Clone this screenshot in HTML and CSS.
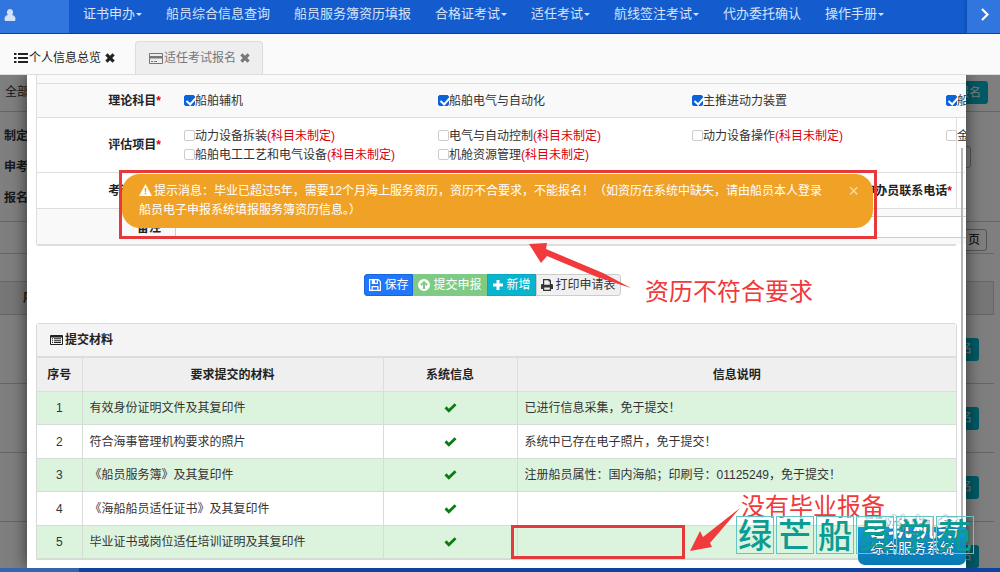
FILE: index.html
```html
<!DOCTYPE html>
<html lang="zh-CN">
<head>
<meta charset="utf-8">
<title>适任考试报名</title>
<link rel="stylesheet" href="styles.css">
</head>
<body>
<svg class="defs" aria-hidden="true">
  <symbol id="check" viewBox="0 0 14 11"><path d="M5.2 10.8.4 6l2.2-2.300 2.600 2.600L11.500.2l2.100 2.200z"/></symbol>
  <symbol id="close" viewBox="0 0 10 10"><path d="M2.500.3 5 2.800 7.500.3 9.700 2.500 7.200 5l2.500 2.500-2.200 2.200L5 7.200 2.500 9.700.3 7.500 2.800 5 .3 2.500z"/></symbol>
</svg>

<header class="topbar">
  <div class="user">
    <svg width="12" height="12" viewBox="0 0 12 12"><path d="M6 0a3 3.300 0 0 1 2.500 5.200L8.300 6C10.500 6.300 11.500 8 11.500 10.200c0 1-.6 1.800-1.500 1.800H2C1.100 12 .5 11.200.5 10.200.5 8 1.500 6.300 3.700 6l-.2-.8A3 3.300 0 0 1 6 0z"/></svg>
  </div>
  <nav class="menu">
    <a href="#" class="drop">证书申办</a>
    <a href="#">船员综合信息查询</a>
    <a href="#">船员服务簿资历填报</a>
    <a href="#" class="drop">合格证考试</a>
    <a href="#" class="drop">适任考试</a>
    <a href="#" class="drop">航线签注考试</a>
    <a href="#">代办委托确认</a>
    <a href="#" class="drop">操作手册</a>
  </nav>
  <button class="more" aria-label="更多">
    <svg width="8" height="13" viewBox="0 0 8 13"><path d="M1 1l5.500 5.500L1 12" fill="none" stroke="#fff" stroke-width="2.200"/></svg>
  </button>
</header>

<div class="tabs">
  <div class="tab">
    <svg width="14" height="10" viewBox="0 0 14 10"><path d="M0 0h2.500v2H0zM4 0h10v2H4zM0 4h2.500v2H0zM4 4h10v2H4zM0 8h2.500v2H0zM4 8h10v2H4z"/></svg>
    <span>个人信息总览</span>
    <button class="tab-close" aria-label="关闭个人信息总览"><svg width="10" height="10"><use href="#close"/></svg></button>
  </div>
  <div class="tab tab-on">
    <svg width="14" height="11" viewBox="0 0 14 11"><path fill-rule="evenodd" d="M1 0h12a1 1 0 0 1 1 1v9a1 1 0 0 1-1 1H1a1 1 0 0 1-1-1V1a1 1 0 0 1 1-1zm0 1v2h12V1zm0 4.500V10h12V5.500zM2 8h2v1H2zm3 0h3v1H5z"/></svg>
    <span>适任考试报名</span>
    <button class="tab-close" aria-label="关闭适任考试报名"><svg width="10" height="10"><use href="#close"/></svg></button>
  </div>
</div>

<main class="work">
  <div class="page">
    <div class="page-head"><span>全部</span><button class="teal">报名</button></div>
    <div class="filters">
      <div class="filter"><b>制定</b></div>
      <div class="filter"><b>申考</b><span class="box"></span></div>
      <div class="filter"><b>报名</b></div>
    </div>
    <div class="pager"><button class="page-btn">页</button></div>
    <div class="list">
      <div class="list-head"><b>序</b></div>
      <div class="list-row"><button class="teal">报名</button></div>
      <div class="list-row"><button class="teal">报名</button></div>
      <div class="list-row"><button class="teal">报名</button></div>
      <div class="list-row"><button class="teal">报名</button></div>
    </div>
  </div>
  <div class="backdrop"></div>

  <section class="modal">
    <form class="form">
      <div class="strip"></div>
      <div class="row row-theory shade">
        <b class="label">理论科目<i>*</i></b>
        <label><input type="checkbox" checked>船舶辅机</label>
        <label><input type="checkbox" checked>船舶电气与自动化</label>
        <label><input type="checkbox" checked>主推进动力装置</label>
        <label><input type="checkbox" checked>船</label>
      </div>
      <div class="row row-practice">
        <b class="label">评估项目<i>*</i></b>
        <label><input type="checkbox">动力设备拆装<em>(科目未制定)</em></label>
        <label><input type="checkbox">电气与自动控制<em>(科目未制定)</em></label>
        <label><input type="checkbox">动力设备操作<em>(科目未制定)</em></label>
        <label><input type="checkbox">金</label>
        <label class="second"><input type="checkbox">船舶电工工艺和电气设备<em>(科目未制定)</em></label>
        <label><input type="checkbox">机舱资源管理<em>(科目未制定)</em></label>
      </div>
      <div class="row-contact">
        <b class="label">考试地点<i>*</i></b>
        <b>申办员联系电话<i>*</i></b>
      </div>
      <div class="row row-note shade">
        <label class="label" for="note">备注</label>
        <input id="note" class="note" type="text">
      </div>
    </form>

    <div class="actions">
      <button class="act save"><svg width="12" height="12" viewBox="0 0 12 12"><path fill-rule="evenodd" d="M0 0h9.500L12 2.500V12H0zM1.200 1.200v9.600h1.300V7h7v3.800h1.300V3L9 1.200V5H2.800V1.200zM6 1.200v2.600h1.800V1.200zM3.700 8.200v2.600h4.600V8.200z"/></svg>保存</button>
      <button class="act submit"><svg width="12" height="12" viewBox="0 0 12 12"><path fill-rule="evenodd" d="M6 0a6 6 0 1 1 0 12A6 6 0 0 1 6 0zm0 1.800L2.200 5.600l1.300 1.300L5 5.400V10h2V5.400l1.500 1.500 1.300-1.300z"/></svg>提交申报</button>
      <button class="act add"><svg width="12" height="12" viewBox="0 0 12 12"><path d="M4.500 1h3v3.500H11v3H7.500V11h-3V7.500H1v-3h3.500z"/></svg>新增</button>
      <button class="act print"><svg width="12" height="12" viewBox="0 0 12 12"><path fill-rule="evenodd" d="M2 0h6.500L10 1.500V5h.8A1.200 1.200 0 0 1 12 6.200V10h-2v2H2v-2H0V6.200A1.200 1.200 0 0 1 1.200 5H2zm1.200 1.200v4.600h5.600V2.500H7.500V1.200zm0 7.300v2.300h5.600V8.500z"/></svg>打印申请表</button>
    </div>

    <div class="panel">
      <h2 class="panel-title"><svg width="13" height="10" viewBox="0 0 13 10"><path fill-rule="evenodd" d="M1 0h11a1 1 0 0 1 1 1v8a1 1 0 0 1-1 1H1a1 1 0 0 1-1-1V1a1 1 0 0 1 1-1zm0 2.500V9h11V2.500zM2 3.300h1v1H2zm2 0h7v1H4zM2 5.200h1v1H2zm2 0h7v1H4zM2 7.100h1v1H2zm2 0h7v1H4z"/></svg>提交材料</h2>
      <table class="docs">
        <thead><tr><th class="c-no">序号</th><th class="c-doc">要求提交的材料</th><th class="c-sys">系统信息</th><th>信息说明</th></tr></thead>
        <tbody>
          <tr><td>1</td><td>有效身份证明文件及其复印件</td><td><svg class="ok"><use href="#check"/></svg></td><td>已进行信息采集，免于提交！</td></tr>
          <tr><td>2</td><td>符合海事管理机构要求的照片</td><td><svg class="ok"><use href="#check"/></svg></td><td>系统中已存在电子照片，免于提交！</td></tr>
          <tr><td>3</td><td>《船员服务簿》及其复印件</td><td><svg class="ok"><use href="#check"/></svg></td><td>注册船员属性：国内海船；印刷号：01125249，免于提交！</td></tr>
          <tr><td>4</td><td>《海船船员适任证书》及其复印件</td><td><svg class="ok"><use href="#check"/></svg></td><td></td></tr>
          <tr><td>5</td><td>毕业证书或岗位适任培训证明及其复印件</td><td><svg class="ok"><use href="#check"/></svg></td><td></td></tr>
        </tbody>
      </table>
    </div>
    <span class="thumb"></span>
  </section>
  <button class="service"><strong>老轨机务</strong><span>综合服务系统</span></button>
</main>
<footer class="foot"><span></span></footer>

<div class="alert" role="alert">
  <p><svg width="13" height="12" viewBox="0 0 13 12"><path fill-rule="evenodd" d="M6.500 0 13 12H0zM5.600 4l.3 4h1.200l.3-4zm.1 4.800v1.500h1.600V8.800z"/></svg>提示消息：毕业已超过5年，需要12个月海上服务资历，资历不合要求，不能报名！（如资历在系统中缺失，请由船员本人登录<br>船员电子申报系统填报服务簿资历信息。）</p>
  <button class="alert-close" aria-label="关闭">×</button>
</div>

<div class="frame frame-alert"></div>
<div class="frame frame-cell"></div>
<svg class="arrows" width="1000" height="572" viewBox="0 0 1000 572" aria-hidden="true">
  <path d="M529 244l18-1-1 6 57 24 28 15-34-11-50-21-6 7zM690 551l10-20 3 6 37-29-30 35 2 4z"/>
</svg>
<p class="remark remark-a">资历不符合要求</p>
<p class="remark remark-b">没有毕业报备</p>
<div class="mark"><span>绿</span><span>芒</span><span>船</span><span>员</span><span>学</span><span>苑</span></div>
</body>
</html>
```

FILE: styles.css
```css
* { box-sizing: border-box; }
body {
  margin: 0;
  height: 100vh;
  display: flex;
  flex-direction: column;
  position: relative;
  overflow: hidden;
  background: #fff;
  color: #333;
  font: 12px/18px "Liberation Sans", "Noto Sans CJK SC", sans-serif;
}
button { font: inherit; cursor: pointer; padding: 0; border: 0; background: none; }
p, h2 { margin: 0; }
i, em { font-style: normal; color: #d8000c; }
svg { fill: currentColor; flex: none; }
.defs { position: absolute; width: 0; height: 0; }

.topbar { display: flex; height: 34px; flex: none; background: #145ccd; border-bottom: 1px solid #0a429c; }
.user { width: 69px; padding: 8px 0 0 4px; background: #3176df; color: #d3e2f8; }
.menu { flex: 1; display: flex; gap: 24px; padding: 4px 0 0 14px; }
.menu a { color: #d5e3fa; font-size: 13px; line-height: 20px; text-decoration: none; white-space: nowrap; }
.drop::after {
  content: ""; display: inline-block; margin-left: 1px; vertical-align: middle;
  border: 3px solid transparent; border-top-color: currentColor; border-bottom: 0;
}
.more { width: 33px; background: #3176df; box-shadow: -2px 0 3px #0f4fb5; padding-left: 2px; }

.tabs { display: flex; align-items: flex-end; height: 41px; flex: none; padding-left: 3px; background: #fafafa; border-bottom: 1px solid #ddd; }
.tab { display: flex; align-items: center; gap: 1px; height: 33px; width: 132px; padding-left: 11px; color: #222; }
.tab-on { width: 128px; padding-left: 13px; background: #eee; border: 1px solid #ddd; border-bottom: 0; border-radius: 4px 4px 0 0; color: #777; }
.tab-close { display: flex; margin-left: 3px; color: inherit; }

.work { flex: 1; min-height: 0; position: relative; overflow: hidden; }
.page-head { display: flex; justify-content: space-between; height: 37px; padding: 6px 12px 8px 5px; line-height: 22px; border-bottom: 1px solid #ccc; }
.teal { width: 50px; height: 23px; padding-right: 7px; text-align: right; border-radius: 3px; background: #00b7cc; color: #fff; }
.filters { height: 110px; padding: 9px 29px 0 4px; border-bottom: 1px solid #ccc; }
.filter { display: flex; justify-content: space-between; height: 31px; line-height: 31px; }
.box { width: 90px; height: 22px; margin-top: -6px; border: 1px solid #aaa; border-radius: 3px; }
.pager { display: flex; justify-content: flex-end; height: 32px; margin-right: 6px; padding: 7px 7px 0 0; border-bottom: 1px solid #ccc; }
.page-btn { width: 40px; height: 22px; padding-right: 6px; text-align: right; border: 1px solid #aaa; border-radius: 3px; }
.list { margin: 27px 6px 0 0; }
.list-head { height: 34px; padding: 7px 0 0 23px; background: #eee; border: 1px solid #ccc; border-left: 0; }
.list-row { display: flex; justify-content: flex-end; align-items: center; height: 69px; padding-right: 15px; border-bottom: 1px solid #ccc; }
.backdrop { position: absolute; inset: 0; background: rgba(0, 0, 0, .5); }

.modal { position: absolute; inset: 0 34px 0 27px; padding: 0 9px; overflow: hidden; background: #fff; }
.work::after { content: ""; position: absolute; inset: 0 34px 0 27px; box-shadow: 0 0 16px rgba(0, 0, 0, .6); pointer-events: none; }
.form { border: 1px solid #ddd; border-top: 0; border-bottom-width: 2px; border-radius: 0 0 3px 3px; }
.strip { height: 8px; margin-right: -9px; background: #f9f9f9; }
.row { display: grid; grid-template-columns: 147px repeat(4, 254px); width: max-content; border-top: 1px solid #ddd; white-space: nowrap; }
.shade { background: #f9f9f9; }
.label { padding-right: 23px; text-align: right; font-weight: bold; color: #222; }
.row-theory { height: 34px; align-items: center; }
.row label { display: flex; align-items: center; }
.row-practice { height: 55px; padding-top: 8px; grid-auto-rows: 19px; }
.row-practice .label { grid-row: span 2; align-self: center; }
.row-practice .second { grid-column: 2; }
.row-contact { display: flex; justify-content: space-between; height: 36px; margin-right: -9px; padding-right: 13px; align-items: center; border-top: 1px solid #ddd; color: #222; }
.row-contact .label { width: 147px; }
.row-note { height: 36px; grid-template-columns: 138px 1016px; align-items: center; }
.row .label[for] { justify-content: flex-end; padding: 2px 14px 0 0; }
.note { height: 22px; border: 1px solid #ccc; background: #fff; font: inherit; }
input[type="checkbox"] { appearance: none; position: relative; flex: none; width: 11px; height: 11px; margin: 0; border: 1px solid #ccc; border-radius: 2px; background: #fff; }
input[type="checkbox"]:checked { background: #0a63d8; border-color: #0a63d8; }
input[type="checkbox"]:checked::after { content: ""; position: absolute; left: 3px; top: 0; width: 4px; height: 7px; border: solid #fff; border-width: 0 2px 2px 0; transform: rotate(42deg); }

.actions { display: flex; justify-content: center; padding: 28px 8px 27px 0; }
.act { display: flex; align-items: center; gap: 3px; height: 22px; padding: 0 4px; border: 1px solid; color: #fff; }
.save { background: #2176fa; border-color: #1766e0; border-radius: 3px 0 0 3px; }
.submit { background: #7fcb86; border-color: #7fcb86; }
.add { background: #09b5cd; border-color: #09a8c0; }
.print { background: #f0f0f0; border-color: #ccc; border-radius: 0 3px 3px 0; color: #333; }

.panel { border: 1px solid #d8d8d8; border-radius: 3px 3px 0 0; }
.panel-title { display: flex; align-items: center; gap: 2px; height: 33px; padding-left: 13px; background: #f4f4f4; border-bottom: 1px solid #ddd; font-size: 12px; color: #222; }
.docs { width: 100%; border-collapse: collapse; table-layout: fixed; }
.docs th, .docs td { height: 33px; padding: 0 7px; border: 1px solid #d6dcd6; }
.docs th { height: 34px; background: #efefef; border-color: #ddd; color: #222; }
.docs tr > :first-child { border-left: 0; }
.docs tr > :last-child { border-right: 0; }
.docs tbody tr:nth-child(odd) { background: #dcf4de; }
.docs tbody tr:nth-child(even) td { height: 34px; }
.docs td:nth-child(odd) { text-align: center; }
.c-no { width: 45px; }
.c-doc { width: 301px; }
.c-sys { width: 134px; }
.ok { display: block; width: 13px; height: 10px; margin: 0 auto; color: #0a7d12; }
.thumb { position: absolute; top: 73px; bottom: 6px; right: 3px; width: 2px; background: #b5b5b5; }
.service { position: absolute; right: 34px; bottom: 3px; height: 50px; width: 108px; display: flex; flex-direction: column; align-items: center; border-radius: 7px; background: linear-gradient(transparent 12px, #159bd7 12px, #0878b2); color: #fff; text-shadow: 0 0 2px #246; }
.service strong { font-size: 24px; line-height: 26px; white-space: nowrap; }
.service span { font-size: 14px; line-height: 14px; white-space: nowrap; }
.foot { height: 4px; flex: none; background: #0d439c; }
.foot span { display: block; width: 79px; height: 4px; background: #3564ae; }

.alert { position: absolute; top: 174px; left: 122px; width: 751px; display: flex; justify-content: space-between; padding: 8px 14px 8px 17px; border-radius: 18px; background: #f0a227; color: #fff; }
.alert p { line-height: 19px; white-space: nowrap; }
.alert p svg { margin-right: 2px; vertical-align: -1px; }
.alert-close { align-self: flex-start; font-size: 18px; color: #f8d9a4; }
.frame { position: absolute; border: 3px solid #e5393b; }
.frame-alert { left: 119px; top: 170px; width: 758px; height: 69px; }
.frame-cell { left: 511px; top: 525px; width: 174px; height: 34px; }
.arrows { position: absolute; left: 0; top: 0; color: #f03a3c; pointer-events: none; }
.remark { position: absolute; font-size: 24px; line-height: 30px; color: #f0393b; white-space: nowrap; }
.remark-a { left: 645px; top: 277px; }
.remark-b { left: 741px; top: 492px; }
.mark { position: absolute; left: 736px; top: 516px; display: flex; gap: 2px; }
.mark span { width: 38px; height: 38px; border: 1px solid #67c4c4; color: #0b9c94; font: 500 34px/34px "Noto Sans CJK SC", sans-serif; text-align: center; }
```
